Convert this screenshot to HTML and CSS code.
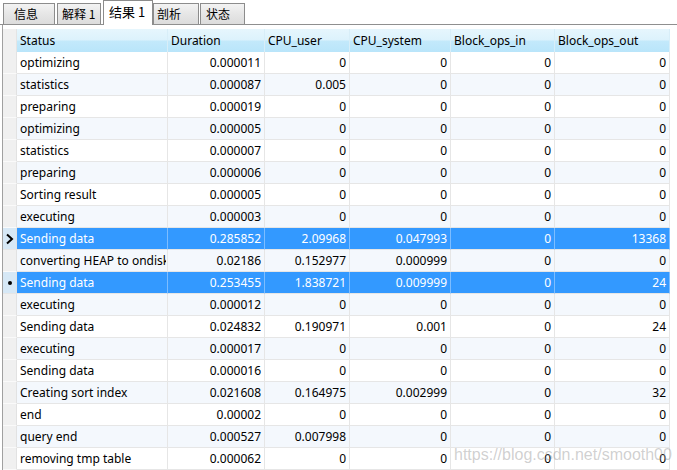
FILE: index.html
```html
<!DOCTYPE html>
<html lang="zh">
<head>
<meta charset="utf-8">
<title>结果 1</title>
<link rel="stylesheet" href="styles.css">
</head>
<body>
<div class="tabs">
  <div class="tab t1">信息</div>
  <div class="tab t2">解释 1</div>
  <div class="tab t3 active">结果 1</div>
  <div class="tab t4">剖析</div>
  <div class="tab t5">状态</div>
</div>
<div class="panel">
  <table class="grid">
    <colgroup>
      <col class="c-rh"><col class="c-status"><col class="c-dur"><col class="c-user"><col class="c-sys"><col class="c-in"><col class="c-out">
    </colgroup>
    <thead>
      <tr>
        <th class="rh"></th><th>Status</th><th>Duration</th><th>CPU_user</th><th>CPU_system</th><th>Block_ops_in</th><th>Block_ops_out</th>
      </tr>
    </thead>
    <tbody>
      <tr><td class="rh"></td><td>optimizing</td><td class="n">0.000011</td><td class="n">0</td><td class="n">0</td><td class="n">0</td><td class="n">0</td></tr>
      <tr class="alt"><td class="rh"></td><td>statistics</td><td class="n">0.000087</td><td class="n">0.005</td><td class="n">0</td><td class="n">0</td><td class="n">0</td></tr>
      <tr><td class="rh"></td><td>preparing</td><td class="n">0.000019</td><td class="n">0</td><td class="n">0</td><td class="n">0</td><td class="n">0</td></tr>
      <tr class="alt"><td class="rh"></td><td>optimizing</td><td class="n">0.000005</td><td class="n">0</td><td class="n">0</td><td class="n">0</td><td class="n">0</td></tr>
      <tr><td class="rh"></td><td>statistics</td><td class="n">0.000007</td><td class="n">0</td><td class="n">0</td><td class="n">0</td><td class="n">0</td></tr>
      <tr class="alt"><td class="rh"></td><td>preparing</td><td class="n">0.000006</td><td class="n">0</td><td class="n">0</td><td class="n">0</td><td class="n">0</td></tr>
      <tr><td class="rh"></td><td>Sorting result</td><td class="n">0.000005</td><td class="n">0</td><td class="n">0</td><td class="n">0</td><td class="n">0</td></tr>
      <tr class="alt"><td class="rh"></td><td>executing</td><td class="n">0.000003</td><td class="n">0</td><td class="n">0</td><td class="n">0</td><td class="n">0</td></tr>
      <tr class="sel"><td class="rh"><svg class="ind" width="10" height="12" viewBox="0 0 10 12"><polyline points="2,1.5 7,6 2,10.5" fill="none" stroke="#000" stroke-width="2"/></svg></td><td>Sending data</td><td class="n">0.285852</td><td class="n">2.09968</td><td class="n">0.047993</td><td class="n">0</td><td class="n">13368</td></tr>
      <tr class="alt"><td class="rh"></td><td><span class="clip">converting HEAP to ondisk</span></td><td class="n">0.02186</td><td class="n">0.152977</td><td class="n">0.000999</td><td class="n">0</td><td class="n">0</td></tr>
      <tr class="sel"><td class="rh"><svg class="ind" width="10" height="12" viewBox="0 0 10 12"><circle cx="5" cy="6" r="2" fill="#000"/></svg></td><td>Sending data</td><td class="n">0.253455</td><td class="n">1.838721</td><td class="n">0.009999</td><td class="n">0</td><td class="n">24</td></tr>
      <tr class="alt"><td class="rh"></td><td>executing</td><td class="n">0.000012</td><td class="n">0</td><td class="n">0</td><td class="n">0</td><td class="n">0</td></tr>
      <tr><td class="rh"></td><td>Sending data</td><td class="n">0.024832</td><td class="n">0.190971</td><td class="n">0.001</td><td class="n">0</td><td class="n">24</td></tr>
      <tr class="alt"><td class="rh"></td><td>executing</td><td class="n">0.000017</td><td class="n">0</td><td class="n">0</td><td class="n">0</td><td class="n">0</td></tr>
      <tr><td class="rh"></td><td>Sending data</td><td class="n">0.000016</td><td class="n">0</td><td class="n">0</td><td class="n">0</td><td class="n">0</td></tr>
      <tr class="alt"><td class="rh"></td><td>Creating sort index</td><td class="n">0.021608</td><td class="n">0.164975</td><td class="n">0.002999</td><td class="n">0</td><td class="n">32</td></tr>
      <tr><td class="rh"></td><td>end</td><td class="n">0.00002</td><td class="n">0</td><td class="n">0</td><td class="n">0</td><td class="n">0</td></tr>
      <tr class="alt"><td class="rh"></td><td>query end</td><td class="n">0.000527</td><td class="n">0.007998</td><td class="n">0</td><td class="n">0</td><td class="n">0</td></tr>
      <tr><td class="rh"></td><td>removing tmp table</td><td class="n">0.000062</td><td class="n">0</td><td class="n">0</td><td class="n">0</td><td class="n">0</td></tr>
    </tbody>
  </table>
  <div class="watermark">https://blog.csdn.net/smooth00</div>
</div>
</body>
</html>
```
FILE: styles.css
```css
html, body {
  margin: 0;
  padding: 0;
  background: #ffffff;
  overflow: hidden;
}
body {
  width: 677px;
  height: 470px;
  font-family: "Noto Sans", "Noto Sans CJK SC", sans-serif;
  font-size: 12px;
  color: #000;
}
.tabs {
  display: flex;
  align-items: flex-end;
  height: 24px;
  padding-left: 3px;
  border-bottom: 1px solid #8f8f8f;
}
.tab {
  box-sizing: border-box;
  height: 21px;
  line-height: 19px;
  border: 1px solid #8c8c8c;
  border-bottom: none;
  background: linear-gradient(#f3f3f3, #e6e6e6 50%, #dcdcdc);
  font-family: "Noto Sans CJK SC", sans-serif;
  font-size: 12px;
  color: #000;
  white-space: nowrap;
  overflow: hidden;
}
.t1 { width: 52px; padding-left: 10px; margin-right: 2px; }
.t2 { width: 44px; padding-left: 4px; margin-right: 2px; }
.t3 { width: 50px; padding-left: 5px; }
.t4 { width: 46px; padding-left: 3px; margin-right: 1px; }
.t5 { width: 45px; padding-left: 5px; }
.tab.active {
  height: 25px;
  line-height: 21px;
  margin-bottom: -1px;
  background: #ffffff;
  font-size: 13px;
}
.panel {
  position: relative;
  height: 445px;
  margin-left: 2px;
  padding-top: 4px;
  border-left: 1px solid #a0a0a0;
}
.grid {
  table-layout: fixed;
  border-collapse: separate;
  border-spacing: 0;
  width: 667px;
}
.c-rh { width: 14px; }
.c-status { width: 151px; }
.c-dur { width: 97px; }
.c-user { width: 85px; }
.c-sys { width: 101px; }
.c-in { width: 104px; }
.c-out { width: 115px; }
.grid th {
  height: 23px;
  padding: 0 3px;
  text-align: left;
  font-weight: normal;
  white-space: nowrap;
  overflow: hidden;
  border-right: 1px solid #d8eef8;
  background: linear-gradient(#e6f6fd 0, #dcf2fc 48%, #c3e9fb 52%, #b9e5fa 100%);
}
.grid th.rh {
  background: #f0f0f0;
  border-right: 1px solid #e4e4e4;
  padding: 0;
}
.grid td {
  height: 21px;
  padding: 0 3px;
  white-space: nowrap;
  overflow: hidden;
  border-right: 1px solid #e6e6e6;
  border-bottom: 1px solid #e6e6e6;
}
.clip {
  display: block;
  width: 146px;
  overflow: hidden;
  white-space: nowrap;
}
.grid td.n { text-align: right; }
.grid tr.alt td { background: #f4f8fd; }
.grid td.rh {
  padding: 0;
  background: #f0f0f0;
  border-right: 1px solid #e2e2e2;
  border-bottom: 1px solid #fafafa;
  text-align: center;
  vertical-align: middle;
}
.grid tr.alt td.rh { background: #f0f0f0; }
.grid tr.sel td {
  background: #3399ff;
  color: #ffffff;
  border-right-color: #7dbdff;
  border-bottom-color: #e6e6e6;
}
.grid tr.sel td.rh {
  background: #d6e8f6;
  border-right-color: #e2e2e2;
}
.ind {
  display: block;
  margin: 0 auto;
}
.watermark {
  position: absolute;
  left: 451px;
  top: 421px;
  font-family: "Liberation Sans", Arial, sans-serif;
  font-size: 16px;
  color: rgba(150, 150, 150, 0.45);
  white-space: nowrap;
  pointer-events: none;
}
```
